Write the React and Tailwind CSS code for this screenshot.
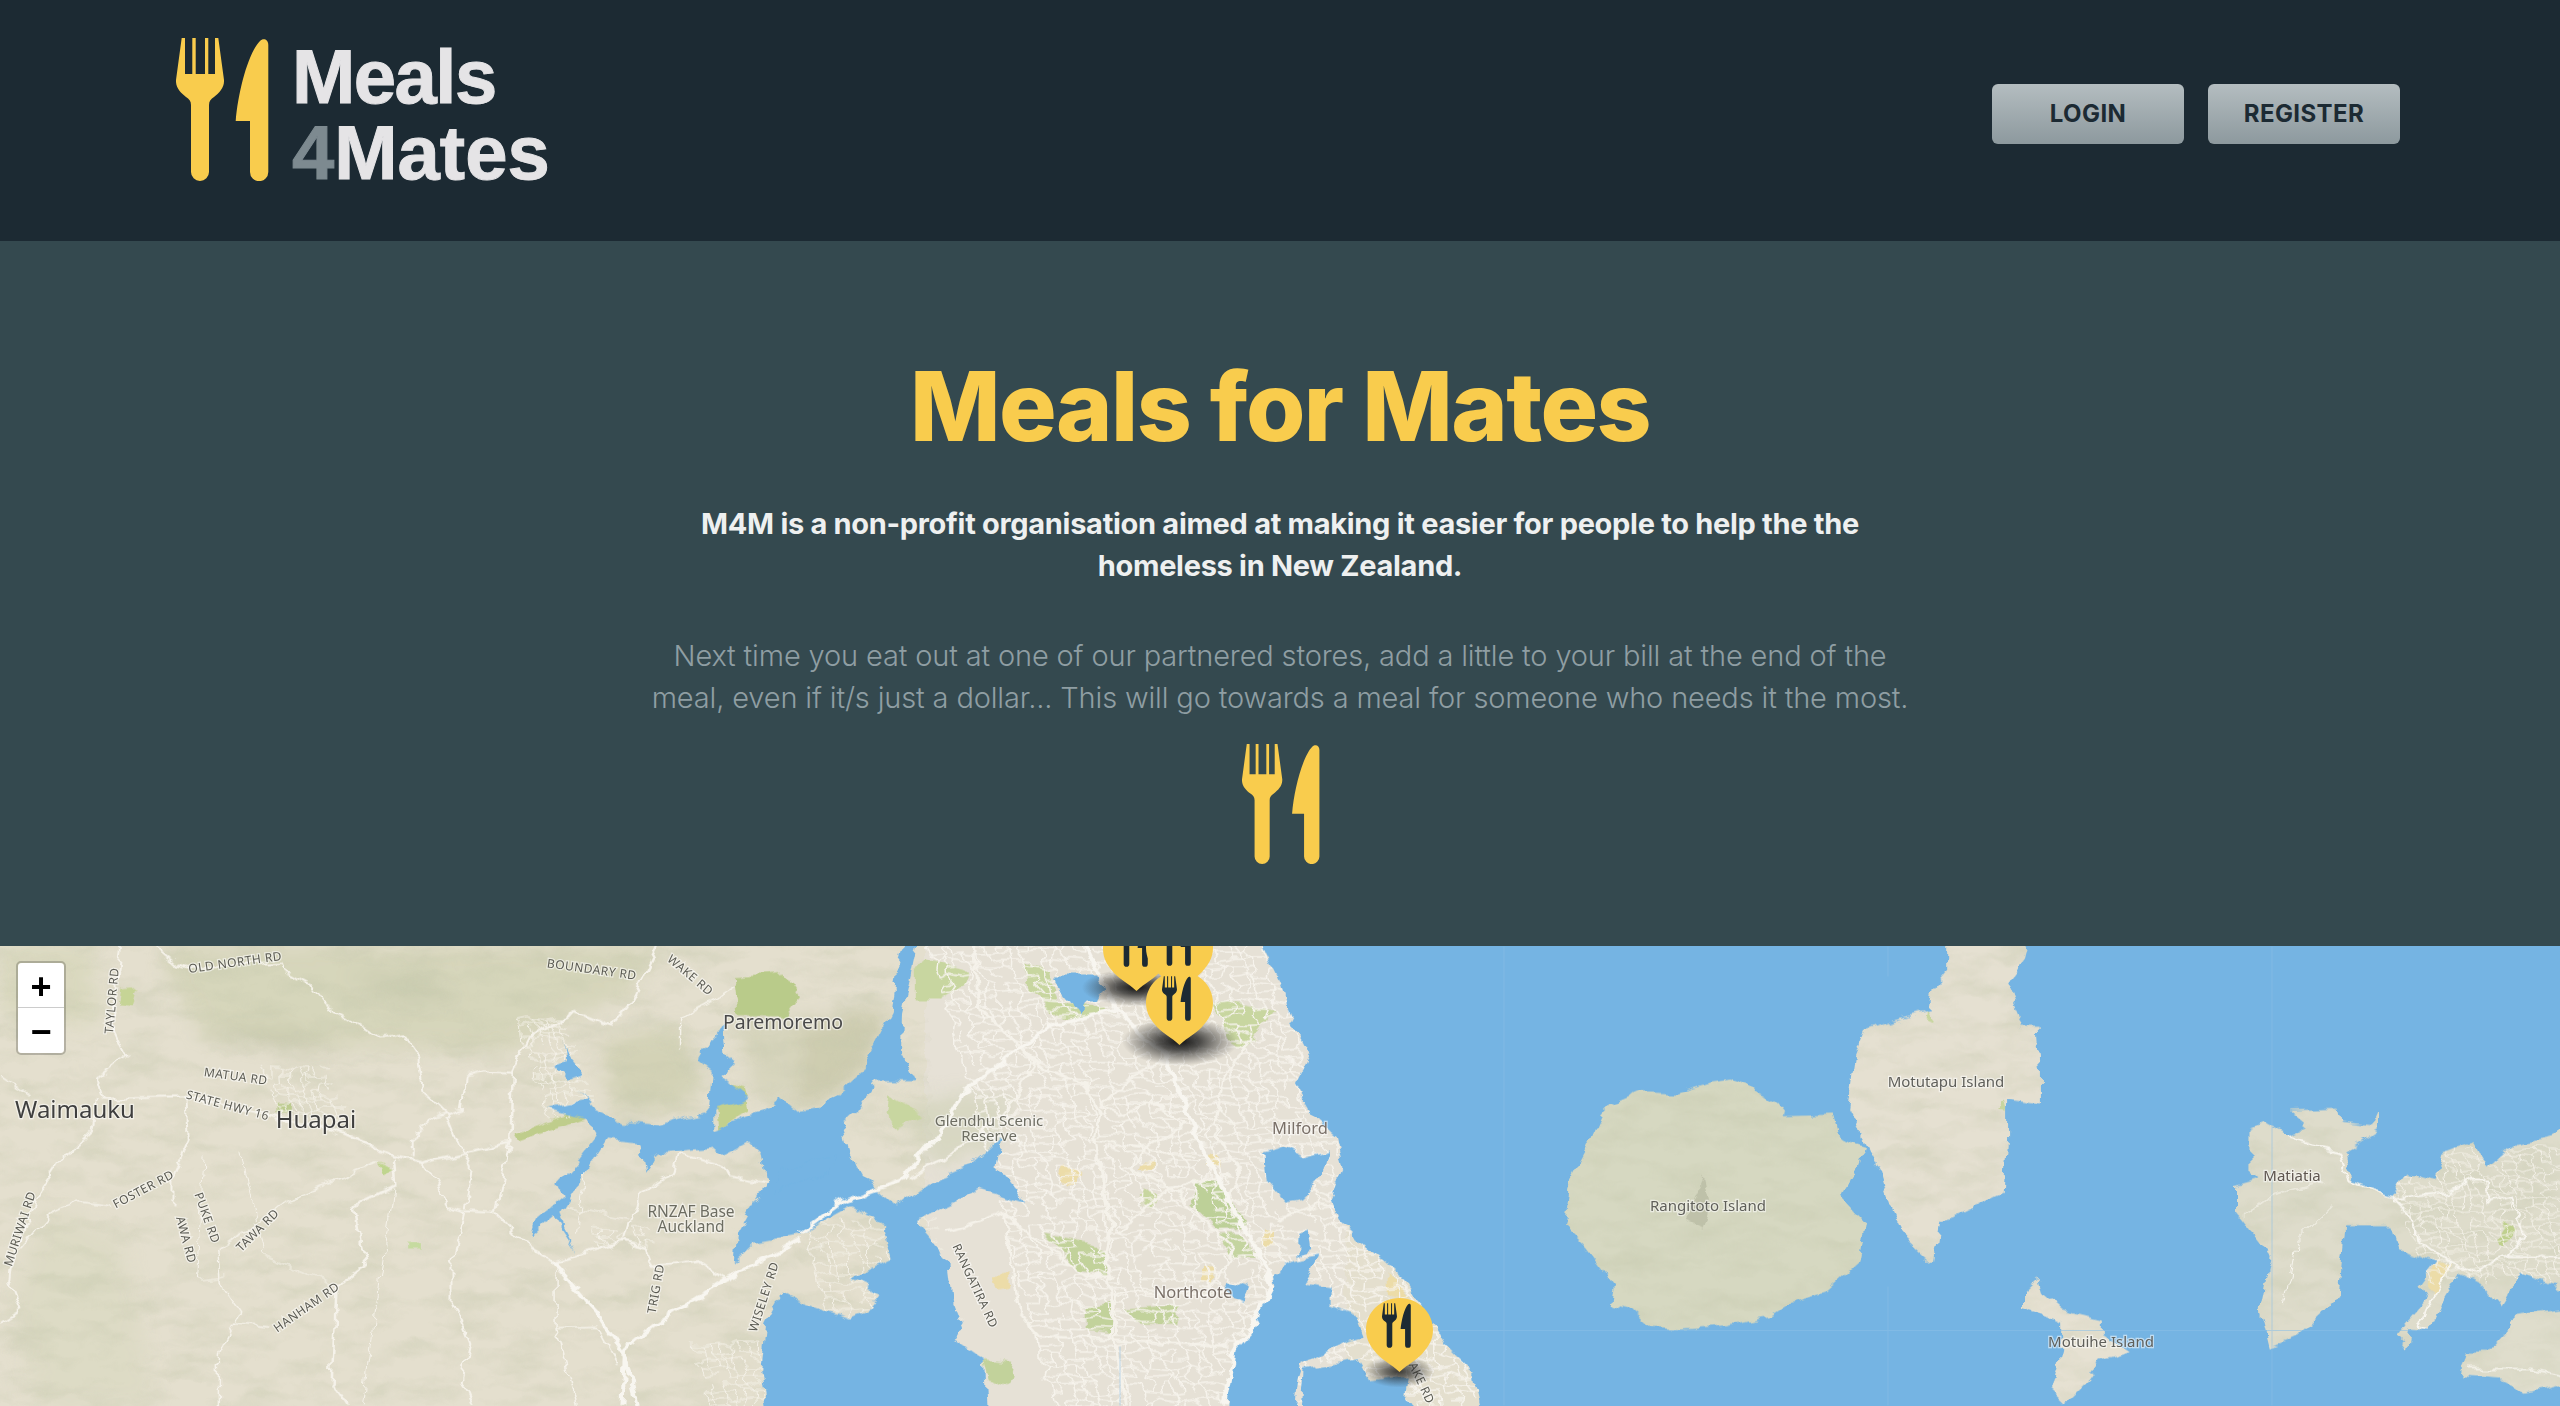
const FORK = 'M5.7 0 L0 42 C-0.5 50 5 55 10 59 C13 61 15 63 15 67 V134 A9 9 0 0 0 33 134 V67 C33 63 35 61 38 59 C43 55 48.5 50 48 42 L42.3 0 H39 V36 H32.3 V0 H29 V36 H19.7 V0 H16.3 V36 H9 V0 Z';
const KNIFE = 'M92.3 7 V134 A9 9 0 0 1 74 134 V83 H59.7 C62 55 72 15 84 3 C87 0 92.3 1 92.3 7 Z';

function Cutlery({ className }) {
    return (
        <svg viewBox="0 0 93 143" className={className} fill="currentColor">
            <path d={FORK} />
            <path d={KNIFE} />
        </svg>
    );
}

// map geometry is traced off the crops: each list has its own scale
const conv = {
    a: (x, y) => [x / 1.96, y / 3 - 7],
    b: (x, y) => [800 + x / 1.96, y / 3 - 7],
    c: (x, y) => [1500 + x / 1.479, y / 3 - 7],
};

const toPath = (space, pts, closed) => {
    const out = pts.trim().split(/\s+/).map((p) => {
        const [x, y] = p.split(',').map(Number);
        const [mx, my] = conv[space](x, y);
        return `${mx.toFixed(1)} ${my.toFixed(1)}`;
    });
    return `M${out.join(' L')}${closed ? ' Z' : ''}`;
};

const WATER = [
    ['b', '880,-60 940,130 960,230 1000,350 970,440 1000,520 1050,590 1065,690 1040,780 1060,850 1110,920 1190,1030 1220,1100 1260,1210 1320,1300 1350,1500 3700,1500 3700,-60'],
    ['a', '1105,300 1110,370 1090,380 1110,420 1145,405 1130,450 1150,480 1070,505 1150,540 1170,590 1120,690 1090,740 1105,770 1050,840 1040,895 1085,830 1130,935 1095,830 1140,720 1190,600 1255,610 1265,700 1285,640 1400,625 1420,650 1470,610 1490,640 1500,730 1470,810 1445,880 1440,970 1480,910 1568,885 1668,800 1733,850 1733,880 1748,960 1668,1020 1728,1060 1698,1120 1668,1140 1568,1090 1530,1060 1500,1150 1490,1290 1510,1500 1938,1500 1928,1260 1873,1200 1888,1170 1868,1090 1858,960 1793,845 1868,790 1918,745 2013,790 1998,770 1953,680 1963,590 1898,680 1818,730 1758,800 1673,680 1650,550 1678,510 1718,425 1793,425 1766,340 1768,220 1783,120 1808,-60 1790,-60 1758,100 1748,220 1688,400 1608,510 1568,520 1530,470 1510,500 1400,570 1400,510 1470,480 1410,410 1440,365 1420,340 1415,250 1370,370 1395,400 1390,500 1380,520 1290,560 1220,550 1165,510 1130,450 1145,405 1110,340'],
    ['b', '0,680 70,640 60,700 0,730 -50,760 -40,690'],
    ['b', '925,1000 930,1040 880,1180 845,1250 830,1500 960,1500 975,1320 985,1270 1060,1215 1105,1190 1090,1130 1040,1100 1040,1040 990,1030 1020,945 960,965'],
    ['b', '985,1290 1090,1260 1115,1325 1195,1310 1190,1370 1240,1500 975,1500'],
    ['b', '910,640 950,620 990,650 1035,630 1020,720 980,780 950,790 915,730'],
    ['b', '500,105 580,105 600,140 585,180 560,180 545,225 510,150'],
    ['b', '840,1020 880,1040 870,1090 830,1060'],
    ['b', '975,880 995,870 1000,930 975,950'],
];

const ISLANDS = [
    { pts: '660,-60 790,-60 775,60 750,130 770,230 765,265 795,265 800,390 800,495 750,480 750,600 745,755 670,830 650,840 640,975 600,900 575,790 560,690 540,610 515,510 525,350 540,270 575,250 635,215 640,150 660,100', fill: '#e5e0d1' },
    { pts: '345,420 370,440 410,490 425,530 495,525 505,600 540,625 530,680 505,770 540,850 530,970 480,1060 430,1090 400,1130 340,1160 270,1170 220,1165 190,1110 165,1095 170,1040 125,920 95,860 105,720 130,625 150,530 165,495 210,455 260,460 310,430', fill: '#d6d8c1' },
    { pts: '795,1020 800,1060 830,1110 890,1140 890,1180 930,1235 890,1260 870,1320 835,1390 815,1350 830,1240 830,1150 775,1100 775,1060', fill: '#e6e1d2' },
    { pts: '1165,510 1240,505 1245,550 1290,560 1300,515 1300,570 1250,640 1260,720 1320,770 1340,700 1385,725 1395,640 1440,605 1460,690 1505,610 1560,590 1568,540 1650,540 1650,1060 1568,1050 1510,1000 1480,1100 1450,1030 1420,1000 1390,1100 1385,1130 1375,1170 1345,1165 1340,1230 1325,1190 1370,1080 1360,1040 1385,970 1330,930 1320,860 1250,860 1240,1075 1180,1190 1140,1225 1125,1100 1140,950 1090,820 1090,740 1125,720 1110,690 1110,570 1130,550 1165,590 1195,560', fill: '#dedccb' },
    { pts: '1500,1130 1568,1110 1650,1110 1650,1300 1520,1360 1480,1320 1420,1310 1430,1240 1460,1240 1490,1170', fill: '#dfddcc' },
];

const PARKS = [
    ['b', '225,90 250,60 330,100 320,140 280,180 225,180', '#c8d6a0'],
    ['b', '440,70 490,90 510,190 600,200 610,220 520,240 450,150', '#c8d6a0'],
    ['b', '810,180 930,210 870,330 840,300', '#c8d6a0'],
    ['b', '780,720 820,720 880,860 820,870 770,790', '#bdd098'],
    ['b', '820,880 860,880 900,960 840,950', '#c4d4a0'],
    ['b', '480,880 540,900 600,930 600,1010 540,990', '#c2d29b'],
    ['b', '560,1100 610,1080 610,1180 560,1170', '#c2d29b'],
    ['b', '640,1110 740,1100 740,1150 660,1150', '#c2d29b'],
    ['b', '175,470 240,530 190,570 170,520', '#c8d6a0'],
    ['b', '360,1260 420,1270 410,1340 370,1320', '#c2d29b'],
    ['b', '-130,110 -30,100 0,170 -30,230 -120,230', '#b9cb8a'],
    ['a', '1400,420 1460,450 1470,510 1410,570', '#c3d08e'],
    ['a', '1010,580 1130,510 1145,540 1020,605', '#bfcd8c'],
    ['a', '240,150 270,145 260,200 235,195', '#c6d496'],
    ['a', '540,490 570,490 570,520 540,520', '#bccb8e'],
    ['a', '740,670 770,690 755,705', '#bfd58e'],
    ['a', '800,910 825,910 825,930 800,930', '#c6dba0'],
    ['b', '670,740 700,780 690,810 660,770', '#c8d6a0'],
    ['b', '520,680 550,700 530,740 505,720', '#ecdca8'],
    ['b', '675,660 695,660 695,690 670,690', '#ecdca8'],
    ['b', '375,1010 410,1005 415,1045 385,1050', '#ecdca8'],
    ['b', '910,870 935,870 935,925 905,925', '#ecdca8'],
    ['b', '800,640 820,640 825,680 800,680', '#ecdca8'],
    ['b', '790,980 810,980 810,1030 790,1030', '#ecdca8'],
    ['b', '1150,1000 1180,1040 1195,1080 1150,1060', '#ecdca8'],
];

const TERRAIN = [
    ['a', '320,18 1300,18 1230,170 1100,240 1000,340 700,320 400,290 330,120', '#cbceab', 0.55],
    ['a', '90,800 240,900 280,1200 300,1400 80,1400 20,1100', '#d3d5b8', 0.4],
    ['a', '0,18 180,18 190,250 60,260 0,200', '#cfd2b0', 0.5],
    ['a', '1180,300 1320,260 1380,420 1340,520 1200,500', '#c8c9a6', 0.6],
    ['a', '1440,230 1568,230 1568,480 1480,480', '#cfcfb2', 0.6],
    ['b', '0,250 180,200 130,400 30,500 0,520', '#c4c4a4', 0.7],
    ['a', '380,280 470,265 560,270 680,340 620,340 500,310', '#b4b798', 0.5],
    ['a', '680,100 830,110 900,190 780,190', '#c0c3a5', 0.5],
    ['b', '180,500 300,460 420,480 380,620 270,680', '#cfd0b5', 0.6],
];

const ROADS = [
    ['a', '305,18 350,75 370,85 550,70 555,95 610,140 640,200 720,270 745,300 790,290 820,360 830,460 875,525 900,620 925,680 915,810', 2],
    ['a', '235,18 220,250 250,350 190,420 200,475 365,470 370,600 340,700 340,800', 2],
    ['a', '0,410 60,470', 1.5],
    ['a', '190,475 180,570 120,660 70,780 25,960 20,1030 40,1110 0,1150', 2],
    ['a', '365,475 450,500 650,570 770,650 830,670 1000,610 1005,400 1040,290 1130,215 1200,260 1240,180 1290,18', 2.5],
    ['a', '1005,400 950,395 915,410 905,510 860,530 805,600 805,650', 2],
    ['a', '770,660 775,740 695,800 715,980 660,1040 650,1330 680,1400', 2.5],
    ['a', '1000,610 970,820 910,815 880,800 830,670', 2],
    ['a', '910,815 885,970 885,1080 920,1210 905,1320 925,1400', 2],
    ['a', '970,825 1010,890 1085,970 1220,905 1265,925 1280,985 1370,965 1420,1015', 2.5],
    ['a', '1225,900 1250,770 1320,700 1330,640 1420,680 1430,710 1500,730', 2],
    ['a', '220,800 150,785 100,820 40,930', 1.5],
    ['a', '425,940 560,790 740,670', 1.5],
    ['a', '1090,1165 1170,1160 1210,1270', 1.5],
    ['a', '1090,970 1090,1170 1130,1400', 1.5],
    ['a', '770,750 710,1400', 1],
    ['a', '530,1160 460,1150 430,1240 430,1400', 1.5],
    ['a', '425,940 430,1030 470,1120 460,1150', 1.5],
    ['a', '1440,140 1400,180 1330,240 1330,330', 1.5],
    ['a', '470,640 520,950 600,1000 660,1040', 1],
    ['a', '400,650 385,1020 440,1010', 1],
    ['a', '1150,680 1130,880', 1],
    ['a', '1110,800 1230,840', 1],
    ['b', '340,18 350,200 430,320 470,380 560,440 590,520 580,600 610,860 600,930 620,1200 640,1400', 3],
    ['b', '430,320 460,380 400,520 330,610 210,720', 2.5],
    ['b', '720,360 640,420 590,500 620,520 700,490 750,560 680,620 650,690 720,730 850,930 800,1060 620,1060', 2.5],
    ['b', '880,300 830,420 810,560 860,700 830,800', 2.5],
    ['b', '290,880 400,820 470,910 560,1010 620,1010', 2.5],
    ['b', '400,820 430,1120 470,1190 620,1200 840,1220', 2.5],
    ['b', '840,700 720,750 620,880', 2.5],
    ['b', '935,840 1020,790 1050,800', 2.5],
    ['b', '580,600 770,650', 2],
    ['b', '620,1060 610,1200', 2],
];

const MOTORWAYS = [
    ['a', '1085,970 1170,1120 1225,1250 1250,1400', 4],
    ['a', '1568,900 1420,1020 1280,1160 1225,1230 1220,1400', 4],
    ['b', '560,18 620,210 720,360 770,570 850,810 915,990 925,1040 880,1180 850,1230 830,1400', 4.5],
    ['b', '0,880 80,790 200,720 270,590 320,460 430,330 490,260 620,210', 4],
];

const WAIHEKE_ROADS = [
    ['c', '1165,590 1240,640 1255,720 1320,770 1350,830 1355,900 1385,945 1410,960 1440,1000 1490,950 1515,880 1495,770 1460,790 1460,720 1440,720 1400,760 1320,780', 2],
    ['c', '1410,960 1375,1090 1360,1160 1375,1170', 2],
    ['c', '1490,950 1568,950', 2],
    ['c', '1215,730 1140,770 1100,830', 1],
    ['c', '1230,800 1180,900 1160,1090', 1],
    ['c', '1430,1290 1520,1290 1568,1310', 1.5],
];

// side streets for the urban parts, the water layer covers what runs offshore
function buildStreets(x0, x1, y0, y1, stepX, stepY, seed) {
    let s = seed;
    const rnd = () => {
        s = (s * 16807) % 2147483647;
        return s / 2147483647;
    };
    const cols = Math.ceil((x1 - x0) / stepX);
    const rows = Math.ceil((y1 - y0) / stepY);
    const nodes = [];
    for (let c = 0; c <= cols; c++) {
        nodes[c] = [];
        for (let r = 0; r <= rows; r++) {
            nodes[c][r] = [x0 + c * stepX + rnd() * stepX * 0.7 + r * 2.2, y0 + r * stepY + rnd() * stepY * 0.6];
        }
    }
    let d = '';
    for (let c = 0; c < cols; c++) {
        for (let r = 0; r < rows; r++) {
            const [x, y] = nodes[c][r];
            if (rnd() < 0.78) d += `M${x.toFixed(1)} ${y.toFixed(1)}L${nodes[c + 1][r][0].toFixed(1)} ${nodes[c + 1][r][1].toFixed(1)}`;
            if (rnd() < 0.78) d += `M${x.toFixed(1)} ${y.toFixed(1)}L${nodes[c][r + 1][0].toFixed(1)} ${nodes[c][r + 1][1].toFixed(1)}`;
        }
    }
    return d;
}

const streets = buildStreets(925, 1345, -5, 465, 11, 8, 4242);
const townStreets = [
    buildStreets(262, 326, 120, 170, 8, 7, 77),
    buildStreets(515, 560, 70, 165, 8, 7, 91),
    buildStreets(590, 640, 280, 300, 8, 7, 55),
    buildStreets(690, 800, 395, 465, 9, 8, 310),
    buildStreets(800, 930, 270, 370, 11, 9, 512),
];
const waihekeStreets = buildStreets(2380, 2560, 200, 330, 9, 7, 1999);

const PLACE_LABELS = [
    { t: 'Waimauku', x: 75, y: 171, s: 24, c: '#3f3f3f' },
    { t: 'Huapai', x: 316, y: 181, s: 24, c: '#3f3f3f' },
    { t: 'Paremoremo', x: 783, y: 82, s: 19.5, c: '#4a4a4a' },
    { t: 'Glendhu Scenic', x: 989, y: 179, s: 15, c: '#6d6d62' },
    { t: 'Reserve', x: 989, y: 194, s: 15, c: '#6d6d62' },
    { t: 'RNZAF Base', x: 691, y: 270, s: 15.5, c: '#6d6d62' },
    { t: 'Auckland', x: 691, y: 285, s: 15.5, c: '#6d6d62' },
    { t: 'Milford', x: 1300, y: 187, s: 16.5, c: '#7a7068' },
    { t: 'Northcote', x: 1193, y: 351, s: 16.5, c: '#7a7068' },
    { t: 'Rangitoto Island', x: 1708, y: 264, s: 15, c: '#5f5f5a' },
    { t: 'Motutapu Island', x: 1946, y: 140, s: 15, c: '#5f5f5a' },
    { t: 'Motuihe Island', x: 2101, y: 400, s: 15, c: '#5f5f5a' },
    { t: 'Matiatia', x: 2292, y: 234, s: 15, c: '#5f5650' },
];

const ROAD_LABELS = [
    { t: 'OLD NORTH RD', x: 235, y: 20, r: -8 },
    { t: 'TAYLOR RD', x: 111, y: 59, r: -85 },
    { t: 'BOUNDARY RD', x: 592, y: 27, r: 8 },
    { t: 'WAKE RD', x: 691, y: 33, r: 40 },
    { t: 'MATUA RD', x: 236, y: 134, r: 8 },
    { t: 'STATE HWY 16', x: 228, y: 163, r: 15 },
    { t: 'FOSTER RD', x: 143, y: 247, r: -28 },
    { t: 'MURIWAI RD', x: 19, y: 287, r: -72 },
    { t: 'PUKE RD', x: 208, y: 276, r: 70 },
    { t: 'AWA RD', x: 187, y: 298, r: 75 },
    { t: 'TAWA RD', x: 257, y: 288, r: -45 },
    { t: 'HANHAM RD', x: 306, y: 365, r: -35 },
    { t: 'TRIG RD', x: 655, y: 347, r: -80 },
    { t: 'WISELEY RD', x: 763, y: 355, r: -72 },
    { t: 'RANGATIRA RD', x: 976, y: 344, r: 65 },
    { t: 'LAKE RD', x: 1421, y: 438, r: 65 },
];

const SHADOWS = [
    { cx: 1180, cy: 95, rx: 58, ry: 24, o: 1 },
    { cx: 1137, cy: 41, rx: 55, ry: 19, o: 1 },
    { cx: 1399, cy: 425, rx: 36, ry: 16, o: 0.8 },
];

function MapBase() {
    return (
        <svg viewBox="0 0 2560 459" className="block w-full h-full">
            <defs>
                <filter id="soft" x="-20%" y="-20%" width="140%" height="140%">
                    <feGaussianBlur stdDeviation="9" />
                </filter>
                {/* rough coastline plus the slightly upscaled look of the tiles */}
                <filter id="tile" x="0" y="0" width="100%" height="100%">
                    <feTurbulence type="fractalNoise" baseFrequency="0.045 0.07" numOctaves="3" seed="8" />
                    <feDisplacementMap in="SourceGraphic" scale="13" xChannelSelector="R" yChannelSelector="G" />
                    <feGaussianBlur stdDeviation="0.5" />
                </filter>
                <filter id="relief" x="0" y="0" width="100%" height="100%">
                    <feTurbulence type="fractalNoise" baseFrequency="0.018 0.055" numOctaves="4" seed="21" />
                    <feColorMatrix values="0 0 0 0 0.56  0 0 0 0 0.58  0 0 0 0 0.42  1.9 0 0 0 -0.82" />
                </filter>
                <clipPath id="islandClip">
                    {ISLANDS.map((isle, i) => (
                        <path key={i} d={toPath('c', isle.pts, true)} />
                    ))}
                </clipPath>
                <radialGradient id="pinShadow">
                    <stop offset="0%" stopColor="#111" stopOpacity="1" />
                    <stop offset="35%" stopColor="#222" stopOpacity="0.78" />
                    <stop offset="100%" stopColor="#333" stopOpacity="0" />
                </radialGradient>
            </defs>

            <g filter="url(#tile)">
                <rect x="-20" y="-20" width="2600" height="500" fill="#e4dfce" />
                <rect x="925" y="-20" width="420" height="500" fill="#e6e1d6" />
                <g filter="url(#soft)">
                    {TERRAIN.map(([sp, pts, fill, o], i) => (
                        <path key={i} d={toPath(sp, pts, true)} fill={fill} opacity={o} />
                    ))}
                </g>
                <rect x="-20" y="-20" width="950" height="500" filter="url(#relief)" opacity="0.5" />
                {PARKS.map(([sp, pts, fill], i) => (
                    <path key={i} d={toPath(sp, pts, true)} fill={fill} />
                ))}
                <path d={streets} stroke="#f6f3ec" strokeWidth="1.5" fill="none" />
                {townStreets.map((d, i) => (
                    <path key={i} d={d} stroke="#f4f1e8" strokeWidth="1" fill="none" />
                ))}
                {ROADS.map(([sp, pts, w], i) => (
                    <path key={i} d={toPath(sp, pts)} stroke="#f5f2ea" strokeWidth={w} fill="none" strokeLinejoin="round" />
                ))}

                {WATER.map(([sp, pts], i) => (
                    <path key={i} d={toPath(sp, pts, true)} fill="#74b4e3" />
                ))}
                {MOTORWAYS.map(([sp, pts, w], i) => (
                    <path key={i} d={toPath(sp, pts)} stroke="#f8f6f0" strokeWidth={w} fill="none" strokeLinejoin="round" />
                ))}

                {ISLANDS.map((isle, i) => (
                    <path key={i} d={toPath('c', isle.pts, true)} fill={isle.fill} />
                ))}
                <g clipPath="url(#islandClip)">
                    <rect x="1500" y="-20" width="1080" height="500" filter="url(#relief)" opacity="0.5" />
                    <path d={toPath('c', '300,715 310,800 300,870 275,840 285,780', true)} fill="#b9bba4" opacity="0.8" />
                    <path d={toPath('c', '1490,840 1505,875 1480,925 1472,900', true)} fill="#bfd08e" />
                    <path d={toPath('c', '1385,970 1410,970 1380,1070 1370,1040', true)} fill="#ecdca8" />
                    <path d={toPath('c', '630,215 642,250 628,240', true)} fill="#c8d6a0" />
                    <path d={toPath('c', '745,480 750,520 735,515', true)} fill="#c8d6a0" />
                    <path d={waihekeStreets} stroke="#f4f1e8" strokeWidth="1" fill="none" />
                    {WAIHEKE_ROADS.map(([sp, pts, w], i) => (
                        <path key={i} d={toPath(sp, pts)} stroke="#f8f6f0" strokeWidth={w} fill="none" strokeLinejoin="round" />
                    ))}
                </g>
            </g>

            {/* tile seams, only on open water */}
            <g stroke="#8ac0e8" strokeWidth="1" opacity="0.55">
                <line x1="1120" x2="1120" y1="400" y2="459" />
                <line x1="1504" x2="1504" y1="0" y2="459" />
                <line x1="1888" x2="1888" y1="0" y2="30" />
                <line x1="1888" x2="1888" y1="340" y2="459" />
                <line x1="2272" x2="2272" y1="0" y2="459" />
                <line x1="1440" x2="2500" y1="384" y2="384" />
            </g>

            <g textAnchor="middle" stroke="#ffffff" strokeOpacity="0.55" strokeWidth="2.5" fontFamily="'Noto Sans', 'Open Sans', sans-serif" style={{ paintOrder: 'stroke' }}>
                {PLACE_LABELS.map((l) => (
                    <text key={l.t} x={l.x} y={l.y} fontSize={l.s} fill={l.c}>{l.t}</text>
                ))}
                {ROAD_LABELS.map((l) => (
                    <text key={l.t} x={l.x} y={l.y} fontSize="12" letterSpacing="0.5" fill="#5a5a52" transform={`rotate(${l.r} ${l.x} ${l.y - 5})`}>{l.t}</text>
                ))}
            </g>

            {SHADOWS.map((sh) => (
                <ellipse key={sh.cx} cx={sh.cx} cy={sh.cy} rx={sh.rx} ry={sh.ry} fill="url(#pinShadow)" opacity={sh.o} />
            ))}
        </svg>
    );
}

function Pin({ className }) {
    return (
        <div className={`absolute w-[67px] h-[74px] ${className}`}>
            <svg viewBox="0 0 67 74" className="absolute inset-0 w-full h-full">
                <path d="M33.5 0 C52 0 67 14 67 32 C67 42 62 49 56 56 C49 63 42 66 33.5 74 C25 66 18 63 11 56 C5 49 0 42 0 32 C0 14 15 0 33.5 0 Z" fill="#f9cc4d" />
            </svg>
            <Cutlery className="absolute left-[16px] top-[5px] w-[29px] h-[45px] text-[#1c2a33]" />
        </div>
    );
}

export default function App() {
    return (
        <div className="h-[1406px] overflow-hidden bg-[#34494f] font-['Inter',sans-serif]">
            {/* Topbar */}
            <header className="h-[241px] bg-[#1c2a33] flex justify-between pl-[176px] pr-[160px]">
                <div className="flex pt-[38px]">
                    <Cutlery className="w-[93px] h-[143px] text-[#f9cc4d]" />
                    <div className="ml-[23px] mt-px text-[76px] leading-[76px] font-bold font-['Liberation_Sans',sans-serif] text-[#e5e4e6] [-webkit-text-stroke:1px_#e5e4e6]">
                        <div className="tracking-[-1.5px]">Meals</div>
                        <div><span className="text-[#7d8a90] [-webkit-text-stroke:1px_#7d8a90]">4</span>Mates</div>
                    </div>
                </div>
                <div className="flex gap-6 pt-[84px]">
                    {['LOGIN', 'REGISTER'].map((label) => (
                        <button key={label} className="w-[192px] h-[60px] rounded-md bg-linear-to-b from-[#b4bdc0] to-[#8d999e] text-[24px] font-bold tracking-[0.4px] text-[#1c2a33]">
                            {label}
                        </button>
                    ))}
                </div>
            </header>

            {/* Intro */}
            <section className="h-[705px] bg-[#34494f] flex flex-col items-center pt-[109px] text-center">
                <h1 className="text-[96px] leading-[112px] font-extrabold tracking-[-1.5px] text-[#f9cc4d]">Meals for Mates</h1>
                <p className="mt-[41px] w-[1200px] text-[29px] leading-[42px] font-bold tracking-[-0.3px] text-[#eef0f0]">
                    M4M is a non-profit organisation aimed at making it easier for people to help the the homeless in New Zealand.
                </p>
                <p className="mt-[48px] w-[1280px] text-[29px] leading-[42px] font-light tracking-[-0.15px] text-[#8f9ea3]">
                    Next time you eat out at one of our partnered stores, add a little to your bill at the end of the meal, even if it/s just a dollar... This will go towards a meal for someone who needs it the most.
                </p>
                <Cutlery className="mt-[25px] ml-[2px] w-[78px] h-[120px] text-[#f9cc4d]" />
            </section>

            {/* Map */}
            <section className="relative h-[460px] overflow-hidden">
                <MapBase />
                <Pin className="left-[1103px] top-[-29px]" />
                <Pin className="left-[1146px] top-[-30px]" />
                <Pin className="left-[1146px] top-[25px]" />
                <Pin className="left-[1366px] top-[352px]" />
                <div className="absolute left-[16px] top-[15px] w-[50px] rounded-[5px] border-2 border-black/20 bg-clip-padding font-['Liberation_Sans',sans-serif]">
                    <button className="block w-[46px] h-[45px] bg-white rounded-t-[4px] border-b border-[#cccccc] text-[36px] leading-[47px] font-bold text-black">+</button>
                    <button className="block w-[46px] h-[45px] bg-white rounded-b-[4px] text-[36px] leading-[47px] font-bold text-black">−</button>
                </div>
            </section>
        </div>
    );
}
